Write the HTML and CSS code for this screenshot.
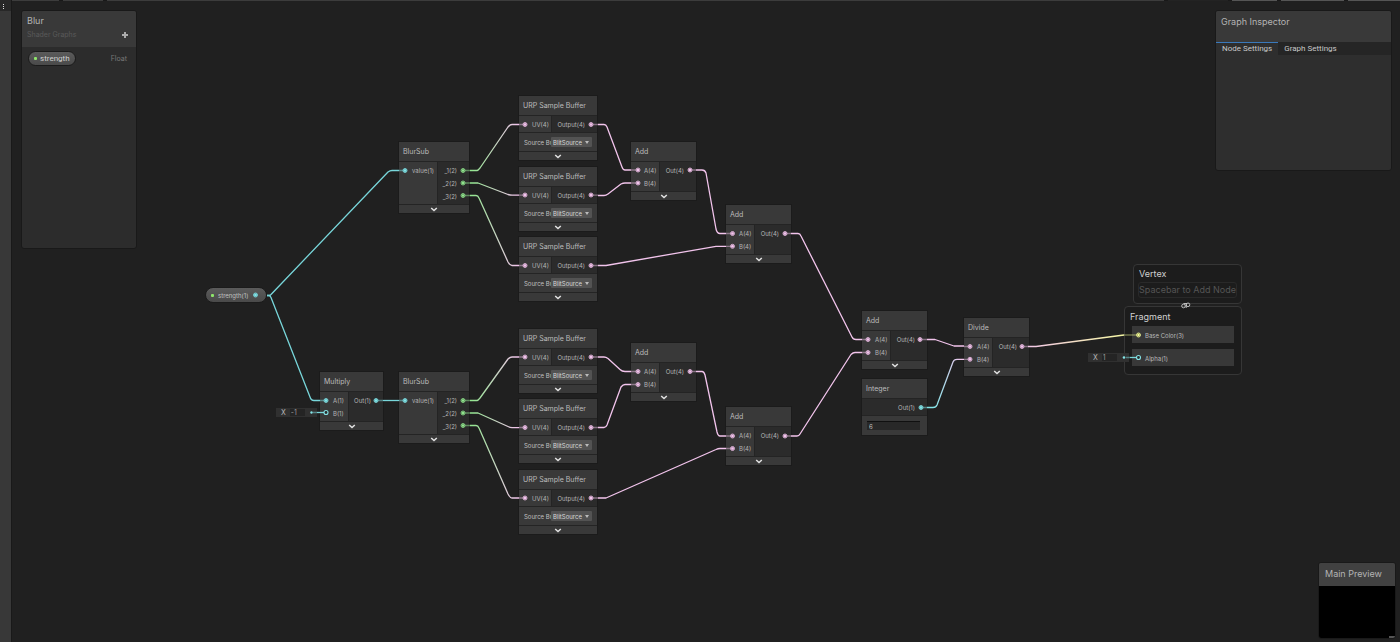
FILE: index.html
```html
<!DOCTYPE html>
<html lang="en">
<head>
<meta charset="utf-8">
<title>Blur - Shader Graph</title>
<link rel="stylesheet" href="styles.css">
</head>
<body>
<svg class="defs" aria-hidden="true">
  <symbol id="chev" viewBox="0 0 8 5"><path d="M1.200 1 L4 3.500 L6.800 1" fill="none" stroke="#e2e2e2" stroke-width="1.5"/></symbol>
</svg>
<div class="app">
  <aside class="rail"><button class="menu" aria-label="Menu"><i></i><i></i><i></i></button></aside>
  <main class="canvas">
    <div class="toolbar"><i class="t1"></i><i class="t2"></i><i class="t3"></i><i class="t4"></i><i class="t5"></i><i class="t6"></i><i class="t7"></i></div>

    <section class="node blursub n-blur1">
      <h3>BlurSub</h3>
      <div class="ports"><ul class="in"><li>value(1)</li></ul><ul class="out"><li>_1(2)</li><li>_2(2)</li><li>_3(2)</li></ul></div>
      <button class="fold" aria-label="Collapse"><svg><use href="#chev"/></svg></button>
    </section>
    <section class="node blursub n-blur2">
      <h3>BlurSub</h3>
      <div class="ports"><ul class="in"><li>value(1)</li></ul><ul class="out"><li>_1(2)</li><li>_2(2)</li><li>_3(2)</li></ul></div>
      <button class="fold" aria-label="Collapse"><svg><use href="#chev"/></svg></button>
    </section>

    <section class="node sample n-s1">
      <h3>URP Sample Buffer</h3>
      <div class="ports"><ul class="in"><li>UV(4)</li></ul><ul class="out"><li>Output(4)</li></ul></div>
      <div class="field"><label for="s1">Source Buffer</label><select id="s1"><option>BlitSource</option></select></div>
      <button class="fold" aria-label="Collapse"><svg><use href="#chev"/></svg></button>
    </section>
    <section class="node sample n-s2">
      <h3>URP Sample Buffer</h3>
      <div class="ports"><ul class="in"><li>UV(4)</li></ul><ul class="out"><li>Output(4)</li></ul></div>
      <div class="field"><label for="s2">Source Buffer</label><select id="s2"><option>BlitSource</option></select></div>
      <button class="fold" aria-label="Collapse"><svg><use href="#chev"/></svg></button>
    </section>
    <section class="node sample n-s3">
      <h3>URP Sample Buffer</h3>
      <div class="ports"><ul class="in"><li>UV(4)</li></ul><ul class="out"><li>Output(4)</li></ul></div>
      <div class="field"><label for="s3">Source Buffer</label><select id="s3"><option>BlitSource</option></select></div>
      <button class="fold" aria-label="Collapse"><svg><use href="#chev"/></svg></button>
    </section>
    <section class="node sample n-s4">
      <h3>URP Sample Buffer</h3>
      <div class="ports"><ul class="in"><li>UV(4)</li></ul><ul class="out"><li>Output(4)</li></ul></div>
      <div class="field"><label for="s4">Source Buffer</label><select id="s4"><option>BlitSource</option></select></div>
      <button class="fold" aria-label="Collapse"><svg><use href="#chev"/></svg></button>
    </section>
    <section class="node sample n-s5">
      <h3>URP Sample Buffer</h3>
      <div class="ports"><ul class="in"><li>UV(4)</li></ul><ul class="out"><li>Output(4)</li></ul></div>
      <div class="field"><label for="s5">Source Buffer</label><select id="s5"><option>BlitSource</option></select></div>
      <button class="fold" aria-label="Collapse"><svg><use href="#chev"/></svg></button>
    </section>
    <section class="node sample n-s6">
      <h3>URP Sample Buffer</h3>
      <div class="ports"><ul class="in"><li>UV(4)</li></ul><ul class="out"><li>Output(4)</li></ul></div>
      <div class="field"><label for="s6">Source Buffer</label><select id="s6"><option>BlitSource</option></select></div>
      <button class="fold" aria-label="Collapse"><svg><use href="#chev"/></svg></button>
    </section>

    <section class="node math n-multiply">
      <h3>Multiply</h3>
      <div class="ports"><ul class="in"><li>A(1)</li><li>B(1)</li></ul><ul class="out"><li>Out(1)</li></ul></div>
      <button class="fold" aria-label="Collapse"><svg><use href="#chev"/></svg></button>
    </section>
    <section class="node math n-add1">
      <h3>Add</h3>
      <div class="ports"><ul class="in"><li>A(4)</li><li>B(4)</li></ul><ul class="out"><li>Out(4)</li></ul></div>
      <button class="fold" aria-label="Collapse"><svg><use href="#chev"/></svg></button>
    </section>
    <section class="node math n-add2">
      <h3>Add</h3>
      <div class="ports"><ul class="in"><li>A(4)</li><li>B(4)</li></ul><ul class="out"><li>Out(4)</li></ul></div>
      <button class="fold" aria-label="Collapse"><svg><use href="#chev"/></svg></button>
    </section>
    <section class="node math n-add3">
      <h3>Add</h3>
      <div class="ports"><ul class="in"><li>A(4)</li><li>B(4)</li></ul><ul class="out"><li>Out(4)</li></ul></div>
      <button class="fold" aria-label="Collapse"><svg><use href="#chev"/></svg></button>
    </section>
    <section class="node math n-add4">
      <h3>Add</h3>
      <div class="ports"><ul class="in"><li>A(4)</li><li>B(4)</li></ul><ul class="out"><li>Out(4)</li></ul></div>
      <button class="fold" aria-label="Collapse"><svg><use href="#chev"/></svg></button>
    </section>
    <section class="node math n-add5">
      <h3>Add</h3>
      <div class="ports"><ul class="in"><li>A(4)</li><li>B(4)</li></ul><ul class="out"><li>Out(4)</li></ul></div>
      <button class="fold" aria-label="Collapse"><svg><use href="#chev"/></svg></button>
    </section>
    <section class="node math n-divide">
      <h3>Divide</h3>
      <div class="ports"><ul class="in"><li>A(4)</li><li>B(4)</li></ul><ul class="out"><li>Out(4)</li></ul></div>
      <button class="fold" aria-label="Collapse"><svg><use href="#chev"/></svg></button>
    </section>
    <section class="node integer n-integer">
      <h3>Integer</h3>
      <div class="ports"><ul class="out"><li>Out(1)</li></ul></div>
      <div class="field"><input type="text" value="6" aria-label="Integer value"></div>
    </section>

    <div class="pill graph-pill">strength(1)</div>

    <section class="stack vertex"><h2>Vertex</h2><p class="hint">Spacebar to Add Node</p></section>
    <section class="stack fragment"><h2>Fragment</h2><div class="block">Base Color(3)</div><div class="block">Alpha(1)</div></section>

    <label class="slot slot-b">X<input type="text" value="-1"></label>
    <label class="slot slot-alpha">X<input type="text" value="1"></label>

    <svg class="wires" width="1388" height="642" viewBox="12 0 1388 642" fill="none" stroke-width="1.3" stroke-linejoin="round">
      <defs>
        <linearGradient id="gp" gradientUnits="userSpaceOnUse" x1="466" y1="0" x2="524" y2="0"><stop offset="0.1" stop-color="#94e691"/><stop offset="0.9" stop-color="#f2c4ec"/></linearGradient>
        <linearGradient id="cp" gradientUnits="userSpaceOnUse" x1="925" y1="0" x2="970" y2="0"><stop offset="0.2" stop-color="#84e4e7"/><stop offset="0.8" stop-color="#f2c4ec"/></linearGradient>
        <linearGradient id="py" gradientUnits="userSpaceOnUse" x1="1022" y1="0" x2="1138" y2="0"><stop offset="0" stop-color="#f2c4ec"/><stop offset="1" stop-color="#f6ff9a"/></linearGradient>
        <g id="cport"><circle r="2" fill="#4f9a9d" stroke="#7cd4d8" stroke-width="0.900"/><circle r="1.300" fill="#84e4e7"/></g>
        <g id="gport"><circle r="2" fill="#426b41" stroke="#8ad887" stroke-width="0.900"/><circle r="1.200" fill="#94e691"/></g>
        <g id="pport"><circle r="2" fill="#8e6f8a" stroke="#e0b4da" stroke-width="0.900"/><circle r="1.300" fill="#f2c4ec"/></g>
        <g id="yport"><circle r="2" fill="#6d7042" stroke="#e6ee90" stroke-width="0.900"/><circle r="1.200" fill="#f6ff9a"/></g>
      </defs>
      <g stroke="#78d6da">
        <path d="M267 295.500H269Q270 295.500 271 294.500L388 172Q390 170.500 392 170.500H399"/>
        <path d="M267 295.500H269Q270 295.500 271 297.500L310 397Q311 400.500 314 400.500H320"/>
        <path d="M383 400.500H399"/>
        <path d="M317 412.500H324"/>
        <path d="M1130 357.500H1136"/>
      </g>
      <g stroke="#78d6da" opacity="0.5"><path d="M313 412.500H317M1126 357.500H1130"/></g>
      <g stroke="url(#gp)">
        <path d="M470 170.500H477Q478 170.500 480 168L508 127Q510 124.500 512 124.500H519"/>
        <path d="M470 183H478L508 194.500Q510 195 512 195.100H519"/>
        <path d="M470 195.500H476Q478 195.500 479 198L508 262Q510 265.500 512 265.500H519"/>
        <path d="M470 400.500H477Q478 400.500 480 398L508 359Q510 357 512 357H519"/>
        <path d="M470 413H478L508 426.500Q510 427.500 512 427.600H519"/>
        <path d="M470 425.500H476Q478 425.500 479 428L508 494Q510 498 512 498H519"/>
      </g>
      <g stroke="#f2c4ec">
        <path d="M598 124.500H604Q606 124.500 607 127L622 167Q623 170 625 170H631"/>
        <path d="M598 195.500H604Q606 195.500 608 194L621 184Q623 183 625 183H631"/>
        <path d="M598 265.500H606L716 246.300H726"/>
        <path d="M696 170H702Q705 170 706 173L716 229Q717 233.500 720 233.500H726"/>
        <path d="M598 357H604Q606 357 608 358.500L620 369.500Q622 371.500 625 371.500H631"/>
        <path d="M598 427.500H604Q606 427.500 607 425L621 387Q623 384.500 625 384.500H631"/>
        <path d="M598 498H606L716 449.500Q718 448.500 720 448.500H726"/>
        <path d="M696 371.500H702Q704 371.500 705 375L717 432Q718 436 720 436H726"/>
        <path d="M791 233.500H798Q800 233.500 801 236L852 337Q853 339.500 856 339.500H862"/>
        <path d="M791 436H797Q799 436 800 434L851 354.500Q853 352.500 855 352.500H862"/>
        <path d="M927 339.500H935L954 346H964"/>
      </g>
      <path stroke="url(#cp)" d="M927 407.500H933Q936 407.500 937 405L953 362Q954 359.300 957 359.300H964"/>
      <path stroke="url(#py)" d="M1028 346.500H1036L1124 335"/>
      <g stroke="#78d6da" opacity="0.5"><path d="M399 170.500H405M320 400.500H326M376 400.500H383M399 400.500H405M921 407.500H927"/></g>
      <g stroke="#94e691" opacity="0.5"><path d="M463 170.500H470M463 183H470M463 195.500H470M463 400.500H470M463 413H470M463 425.500H470"/></g>
      <g stroke="#f2c4ec" opacity="0.45"><path d="M519 124.500H525M519 195.200H525M519 265.500H525M519 357H525M519 427.500H525M519 498H525M591 124.500H598M591 195.200H598M591 265.500H598M591 357H598M591 427.500H598M591 498H598M631 170H638M631 183H638M690 170H696M631 371.500H638M631 384.500H638M690 371.500H696M726 233.500H733M726 246.300H733M785 233.500H791M726 436H733M726 448.500H733M785 436H791M862 339.500H868M862 352.500H868M920 339.500H927M964 346.500H970M964 359.300H970M1022 346.500H1028"/></g>
      <path stroke="#f6ff9a" opacity="0.45" d="M1124 335H1138"/>
      <use href="#cport" x="255.500" y="295"/><use href="#cport" x="405" y="170.500"/><use href="#cport" x="326" y="400.500"/><use href="#cport" x="376" y="400.500"/><use href="#cport" x="405" y="400.500"/><use href="#cport" x="921" y="407.500"/>
      <use href="#gport" x="463" y="170.500"/><use href="#gport" x="463" y="183"/><use href="#gport" x="463" y="195.500"/><use href="#gport" x="463" y="400.500"/><use href="#gport" x="463" y="413"/><use href="#gport" x="463" y="425.500"/>
      <use href="#pport" x="525" y="124.500"/><use href="#pport" x="525" y="195"/><use href="#pport" x="525" y="265.500"/><use href="#pport" x="525" y="357"/><use href="#pport" x="525" y="427.500"/><use href="#pport" x="525" y="498"/>
      <use href="#pport" x="591" y="124.500"/><use href="#pport" x="591" y="195"/><use href="#pport" x="591" y="265.500"/><use href="#pport" x="591" y="357"/><use href="#pport" x="591" y="427.500"/><use href="#pport" x="591" y="498"/>
      <use href="#pport" x="638" y="170"/><use href="#pport" x="638" y="183"/><use href="#pport" x="690" y="170"/><use href="#pport" x="638" y="371.500"/><use href="#pport" x="638" y="384.500"/><use href="#pport" x="690" y="371.500"/>
      <use href="#pport" x="732.500" y="233.500"/><use href="#pport" x="732.500" y="246.300"/><use href="#pport" x="785" y="233.500"/><use href="#pport" x="732.500" y="436"/><use href="#pport" x="732.500" y="448.500"/><use href="#pport" x="785" y="436"/>
      <use href="#pport" x="868" y="339.500"/><use href="#pport" x="868" y="352.500"/><use href="#pport" x="920" y="339.500"/><use href="#pport" x="970" y="346.500"/><use href="#pport" x="970" y="359.300"/><use href="#pport" x="1022" y="346.500"/>
      <use href="#yport" x="1138.500" y="335"/>
      <g fill="#2a2a2a" stroke="#84e4e7" stroke-width="1.1"><circle cx="326" cy="412.500" r="2"/><circle cx="1138.500" cy="357.500" r="2"/></g>
      <g fill="#84e4e7"><circle cx="311.500" cy="412.500" r="1.200"/><circle cx="1124" cy="357.500" r="1.300"/></g>
      <g stroke="#c8c8c8" stroke-width="0.900"><circle cx="1183.500" cy="306" r="1.800"/><path d="M1183.500 303.500H1187M1186.200 308V303.500"/><circle cx="1188" cy="304.800" r="1.800"/></g>
    </svg>

    <aside class="panel blackboard">
      <header><h1>Blur</h1><div class="sub"><span>Shader Graphs</span><button class="plus" aria-label="Add property"></button></div></header>
      <div class="prop"><span class="pill">strength</span><span class="type">Float</span></div>
    </aside>
    <aside class="panel inspector">
      <header><h1>Graph Inspector</h1></header>
      <nav class="tabs"><button class="tab active">Node Settings</button><button class="tab">Graph Settings</button></nav>
    </aside>
    <aside class="panel preview"><header><h1>Main Preview</h1></header><div class="screen"><i></i></div></aside>
  </main>
</div>
</body>
</html>
```
FILE: styles.css
```css
* { box-sizing: border-box; margin: 0; padding: 0; }
body { background: #202020; color: #c0c0c0; font-family: Inter, "Liberation Sans", sans-serif; font-size: 6px; }
button, input, select { font: inherit; color: inherit; border: 0; background: none; border-radius: 0; }
h1, h2, h3 { font-weight: 400; }
ul { list-style: none; }
.defs { position: absolute; width: 0; height: 0; }
.app { display: flex; height: 100vh; overflow: hidden; }
.rail { width: 12px; flex: none; background: #383838; border-right: 1px solid #191919; }
.menu { display: flex; flex-direction: column; gap: 1px; width: 11px; height: 11px; padding: 4px 3px; background: #282828; }
.menu i { width: 1px; height: 1px; flex: none; background: #e0e0e0; }
.canvas { position: relative; flex: 1; min-width: 0; overflow: hidden; background: #202020; }

.toolbar { display: flex; height: 1px; gap: 4px; background: #191919; }
.toolbar i { background: #3c3c3c; }
.t1 { width: 47px; } .t2 { width: 40px; } .t3 { flex: 1; } .t4 { width: 60px; } .t5 { width: 45px; } .t6 { width: 63px; } .t7 { width: 52px; }
.toolbar .t4 { background: #232323; }
.toolbar .t5, .toolbar .t6, .toolbar .t7 { background: #555; }

/* Graph nodes */
.node { position: absolute; display: flex; flex-direction: column; gap: 1px; background: #242424; border: 1px solid #1b1b1b; }
.node h3 { height: 19px; padding-left: 4px; background: #393939; font-size: 7px; line-height: 19px; color: #bcbcbc; white-space: nowrap; }
.ports { display: flex; background: #2b2b2b; }
.ports ul { padding-top: 2px; padding-bottom: 1px; }
.ports li { height: 13px; line-height: 14px; color: #b4b4b4; white-space: nowrap; }
.ports .in { padding-left: 13px; background: #393939; border-right: 1px solid #242424; }
.ports .out { flex: 1; padding-right: 12px; text-align: right; }
.fold { display: flex; align-items: center; justify-content: center; height: 8px; background: #393939; }
.fold svg { width: 8px; height: 5px; }
.field { display: flex; align-items: center; height: 18px; padding: 0 5px; background: #393939; }
.field label { width: 27px; overflow: hidden; white-space: nowrap; }
.blursub { width: 72px; }
.blursub .in { width: 39px; }
.math { width: 67px; }
.math .in { width: 29px; }
.sample { width: 80px; }
.sample .in { width: 33px; }
.sample select { width: 41px; height: 10px; padding-left: 2px; appearance: none; color: #d8d8d8; background: #535353; border-radius: 1px; }
.sample .field { position: relative; }
.sample .field::after { content: ""; position: absolute; right: 8px; top: 8px; border: 2px solid transparent; border-top: 3px solid #bbb; border-bottom: 0; }
.integer { width: 67px; }
.integer .field { height: 19px; }
.integer input { width: 53px; height: 9px; padding-left: 2px; background: #282828; border-top: 1px solid #101010; }

.n-blur1 { left: 386px; top: 141px; }
.n-blur2 { left: 386px; top: 371px; }
.n-s1 { left: 506px; top: 95px; }
.n-s2 { left: 506px; top: 166px; }
.n-s3 { left: 506px; top: 236px; }
.n-s4 { left: 506px; top: 328px; }
.n-s5 { left: 506px; top: 398px; }
.n-s6 { left: 506px; top: 469px; }
.n-multiply { left: 307px; top: 371px; width: 65px; }
.n-add1 { left: 618px; top: 141px; }
.n-add2 { left: 713px; top: 204px; }
.n-add3 { left: 618px; top: 342px; }
.n-add4 { left: 713px; top: 406px; }
.n-add5 { left: 849px; top: 310px; }
.n-divide { left: 951px; top: 317px; }
.n-integer { left: 849px; top: 378px; }

.pill { display: inline-flex; align-items: center; background: linear-gradient(#5b5b5b, #4a4a4a); border: 1px solid #1b1b1b; border-radius: 8px; }
.pill::before { content: ""; width: 3px; height: 3px; border-radius: 1px; background: #8ee66b; }
.graph-pill { position: absolute; left: 193px; top: 287px; width: 62px; height: 16px; padding: 0 5px; gap: 4px; }

.stack { position: absolute; display: flex; flex-direction: column; background: #1c1c1c; border: 1px solid #363636; border-radius: 4px; }
.stack h2 { font-size: 9px; line-height: 12px; color: #d0d0d0; }
.vertex { left: 1121px; top: 264px; width: 109px; padding: 3px 4px; gap: 2px; }
.vertex h2 { padding-left: 1px; }
.hint { height: 16px; border: 1px solid #292929; border-radius: 3px; text-align: center; font-size: 9px; line-height: 14px; color: #555; white-space: nowrap; }
.vertex { height: 40px; }
.fragment { left: 1112px; top: 306px; width: 118px; height: 69px; padding: 4px 7px; gap: 6px; }
.fragment h2 { margin-left: -2px; margin-bottom: -3px; }
.block { height: 17px; padding-left: 13px; background: #383838; line-height: 19px; color: #b8b8b8; }

.slot { position: absolute; display: flex; align-items: center; width: 41px; height: 9px; padding-left: 5px; gap: 4px; background: #303030; color: #b8b8b8; font-size: 7px; }
.slot input { width: 15px; height: 7px; padding-left: 1px; background: #242424; color: #999; }
.slot-b { left: 264px; top: 408px; }
.slot-alpha { left: 1076px; top: 353px; }

.wires { position: absolute; left: 0; top: 0; pointer-events: none; }

/* Floating panels */
.panel { position: absolute; display: flex; flex-direction: column; overflow: hidden; background: #2c2c2c; border: 1px solid #191919; border-radius: 3px; }
.panel header { background: #393939; }
.panel h1 { font-size: 9px; line-height: 12px; color: #b4b4b4; white-space: nowrap; }
.blackboard { left: 9px; top: 10px; width: 116px; height: 239px; }
.blackboard header { height: 36px; padding: 4px 8px 0 5px; }
.sub { display: flex; justify-content: space-between; align-items: center; height: 15px; font-size: 7px; color: #5a5a5a; }
.plus { width: 6px; height: 6px; background: linear-gradient(#ddd, #ddd) center / 6px 2px no-repeat, linear-gradient(#ddd, #ddd) center / 2px 6px no-repeat; opacity: 0.7; }
.prop { display: flex; justify-content: space-between; align-items: center; padding: 4px 9px 0 6px; font-size: 7px; }
.prop .pill { height: 15px; padding: 0 5px; gap: 3px; color: #d0d0d0; font-family: Roboto, Inter, sans-serif; font-size: 8px; }
.type { color: #777; }
.inspector { right: 8px; top: 10px; width: 177px; height: 161px; background: #2e2e2e; }
.inspector header { height: 31px; padding: 5px; }
.tabs { display: flex; height: 13px; background: #252525; }
.tab { padding: 0 6px; font-family: Roboto, Inter, sans-serif; font-size: 8px; line-height: 12px; color: #c8c8c8; border-top: 1px solid #252525; white-space: nowrap; }
.active { background: #2e2e2e; border-color: #3a79bb; }
.preview { right: 4px; bottom: 3px; width: 78px; height: 77px; }
.preview header { height: 23px; padding: 5px 6px; background: #414141; }
.screen { flex: 1; display: flex; align-items: flex-end; justify-content: flex-end; background: #000; }
.screen i { width: 6px; height: 2px; background: #555; }
```
